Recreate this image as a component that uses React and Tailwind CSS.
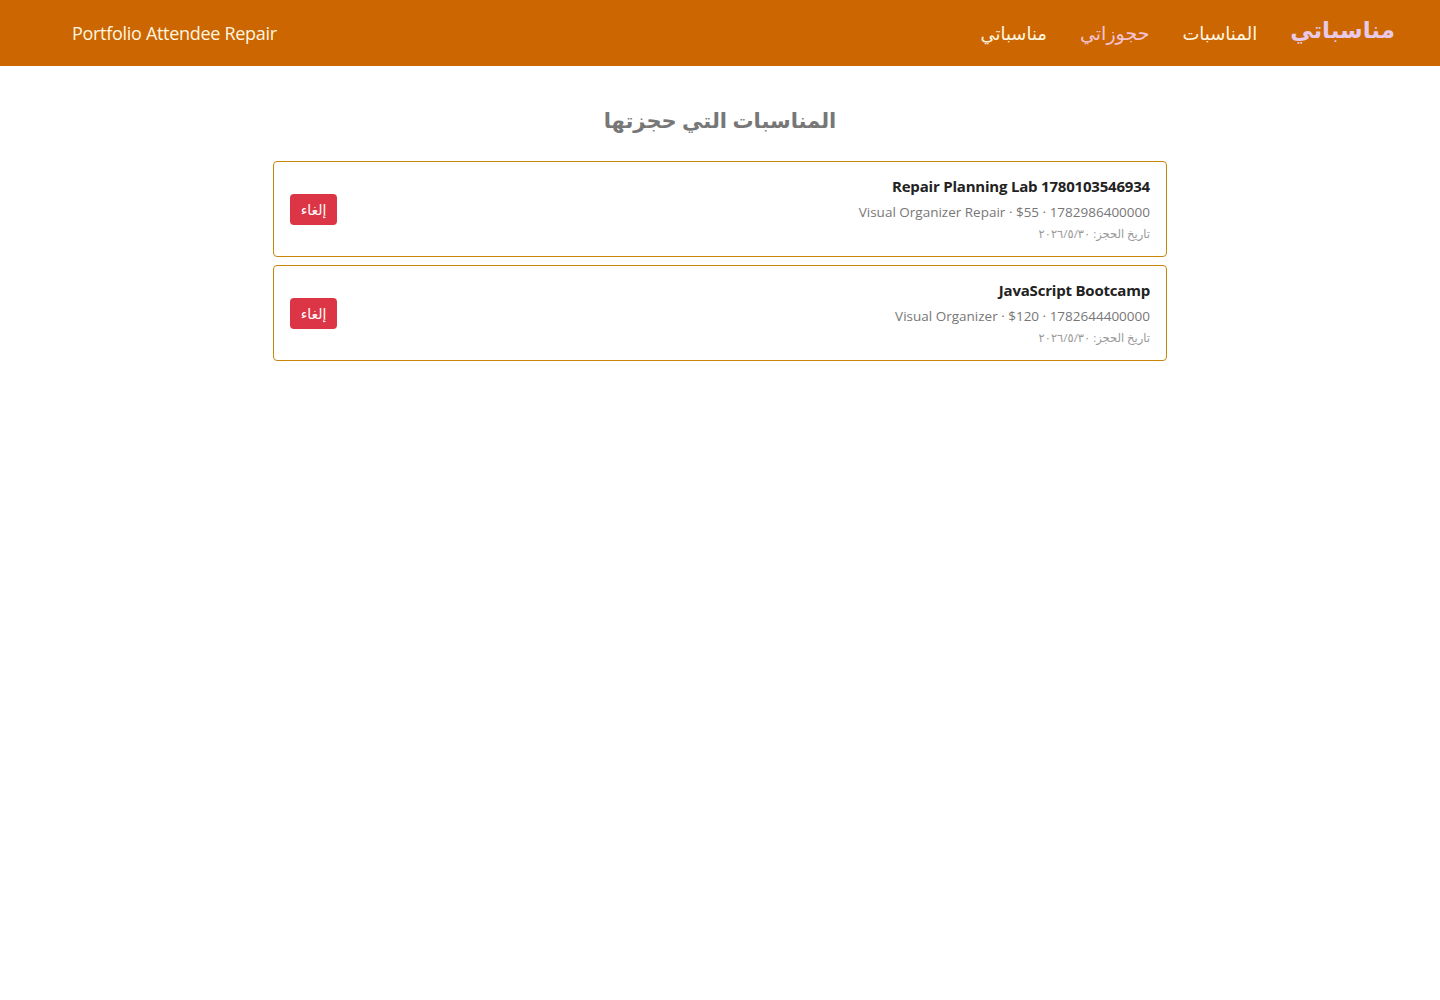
import React from "react";

const bookings = [
  { title: "Repair Planning Lab 1780103546934", meta: "Visual Organizer Repair · $55 · 1782986400000", date: "تاريخ الحجز: ٢٠٢٦/٥/٣٠" },
  { title: "JavaScript Bootcamp", meta: "Visual Organizer · $120 · 1782644400000", date: "تاريخ الحجز: ٢٠٢٦/٥/٣٠" },
];

export default function App() {
  return (
    <div dir="rtl" className="min-h-screen bg-white font-['Open_Sans','DejaVu_Sans',sans-serif]">
      <header className="h-[66px] bg-[#cc6600] flex items-center justify-between pr-[45px] pl-[72px]">
        <nav className="flex items-center gap-[33px]">
          <span className="text-[23px] font-bold text-[#e8c9e6] leading-none mb-[8px]">مناسباتي</span>
          <span className="text-[18px] text-[#fff6e0]">المناسبات</span>
          <span className="text-[19px] text-[#f7c3d3]">حجوزاتي</span>
          <span className="text-[18px] text-[#fff6e0]">مناسباتي</span>
        </nav>
        <div dir="ltr" className="text-[18px] text-[#fff6e0] tracking-[-0.3px]">Portfolio Attendee Repair</div>
      </header>
      <main className="w-[894px] mx-auto pt-[38px]">
        <h2 className="text-center text-[21px] font-bold text-[#777777] leading-[32px] mb-[25px]">المناسبات التي حجزتها</h2>
        <div className="flex flex-col gap-[8px]">
          {bookings.map((b, i) => (
            <div key={i} className="border border-[#c8860a] rounded-[4px] px-[16px] py-[13px] flex items-center justify-between">
              <div className="flex flex-col">
                <div dir="ltr" className="text-right text-[15px] font-bold text-[#222222] leading-[22px] tracking-[-0.2px]">{b.title}</div>
                <div dir="ltr" className="text-right text-[13.5px] text-[#777777] leading-[22px] mt-[4px]">{b.meta}</div>
                <div className="text-[11.5px] text-[#999999] leading-[18px] mt-[2px]">{b.date}</div>
              </div>
              <button className="bg-[#dc3545] text-white text-[14px] rounded-[4px] w-[47px] h-[31px] flex items-center justify-center">إلغاء</button>
            </div>
          ))}
        </div>
      </main>
    </div>
  );
}
